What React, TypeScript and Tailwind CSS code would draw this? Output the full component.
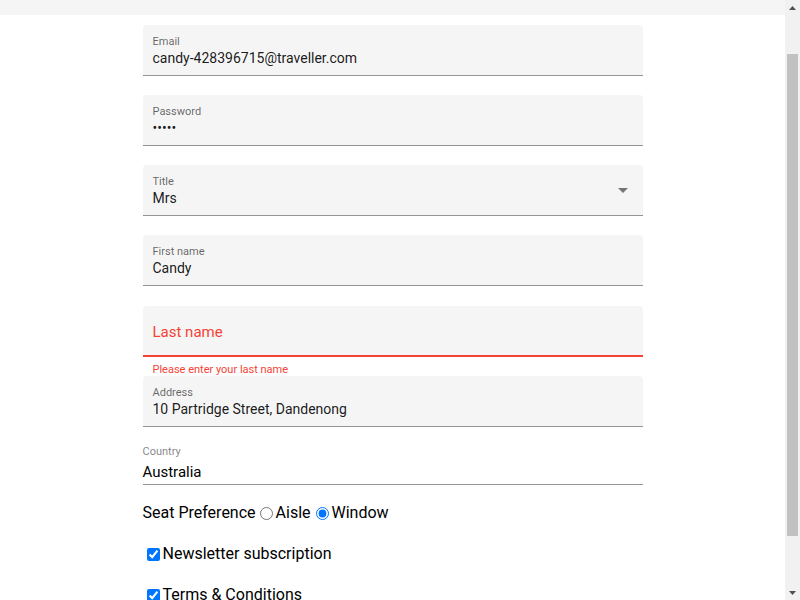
function FilledField({ label, value, select }: { label: string; value: string; select?: boolean }) {
  return (
    <div className="h-[70px]">
      <div className="relative h-[51px] bg-[#f5f5f5] rounded-t border-b border-[#949494] px-[10px] pt-[10px]">
        <div className="text-[11px] leading-[14px] text-black/60">{label}</div>
        <div className="text-[14px] leading-[18px] text-black/90">{value}</div>
        {select && (
          <svg className="absolute right-[15px] top-[23px] w-[10px] h-[5px]" viewBox="0 0 10 5">
            <path d="M0 0h10L5 5z" fill="#757575" />
          </svg>
        )}
      </div>
    </div>
  );
}

function Scrollbar() {
  return (
    <div className="w-[15px] h-full bg-[#f1f1f1] flex flex-col items-center shrink-0">
      <div className="h-[15px] w-full flex items-center justify-center">
        <svg width="7" height="4" viewBox="0 0 7 4">
          <path d="M0 4h7L3.5 0z" fill="#505050" />
        </svg>
      </div>
      <div className="mt-[39px] h-[482px] w-[11px] bg-[#c1c1c1]"></div>
      <div className="flex-1"></div>
      <div className="h-[15px] w-full flex items-center justify-center">
        <svg width="7" height="4" viewBox="0 0 7 4">
          <path d="M0 0h7L3.5 4z" fill="#505050" />
        </svg>
      </div>
    </div>
  );
}

export default function App() {
  return (
    <div
      className="h-screen flex overflow-hidden bg-white text-black"
      style={{ fontFamily: 'Roboto, "Liberation Sans", sans-serif' }}
    >
      <div className="flex-1 overflow-hidden">
        {/* Header (scrolled mostly out of view) */}
        <div className="h-[15px] bg-[#f5f5f5]"></div>

        <form className="w-[500px] mx-auto pt-[10px]">
          <FilledField label="Email" value="candy-428396715@traveller.com" />
          <FilledField label="Password" value="•••••" />
          <FilledField label="Title" value="Mrs" select />
          <FilledField label="First name" value="Candy" />

          {/* Last name - invalid */}
          <div className="h-[70px] mt-[1px]">
            <div className="h-[51px] bg-[#f5f5f5] rounded-t border-b-2 border-[#f44336] px-[10px] pt-[16px]">
              <div className="text-[15px] leading-[20px] text-[#f44336]">Last name</div>
            </div>
            <div className="px-[10px] pt-[6px] text-[11px] leading-[14px] text-[#f44336]">Please enter your last name</div>
          </div>

          <FilledField label="Address" value="10 Partridge Street, Dandenong" />

          {/* Country - plain */}
          <div className="border-b border-[#949494] pb-[2px]">
            <div className="text-[11px] leading-[12px] text-black/50">Country</div>
            <div className="mt-[4px] text-[15px] leading-[20px]">Australia</div>
          </div>

          <div className="mt-[19px] flex items-center h-[18px] text-[16px]">
            <span>Seat Preference</span>
            <input type="radio" name="seat" className="ml-[4px] mr-[3px] w-[13px] h-[13px]" />
            <span>Aisle</span>
            <input type="radio" name="seat" defaultChecked className="ml-[5px] mr-[3px] w-[13px] h-[13px]" />
            <span>Window</span>
          </div>

          <label className="mt-[23px] flex items-center h-[18px] text-[16px]">
            <input type="checkbox" defaultChecked className="ml-[4px] mr-[3px] w-[13px] h-[13px]" />
            <span>Newsletter subscription</span>
          </label>

          <label className="mt-[23px] flex items-center h-[18px] text-[16px]">
            <input type="checkbox" defaultChecked className="ml-[4px] mr-[3px] w-[13px] h-[13px]" />
            <span>Terms &amp; Conditions</span>
          </label>
        </form>
      </div>
      <Scrollbar />
    </div>
  );
}
